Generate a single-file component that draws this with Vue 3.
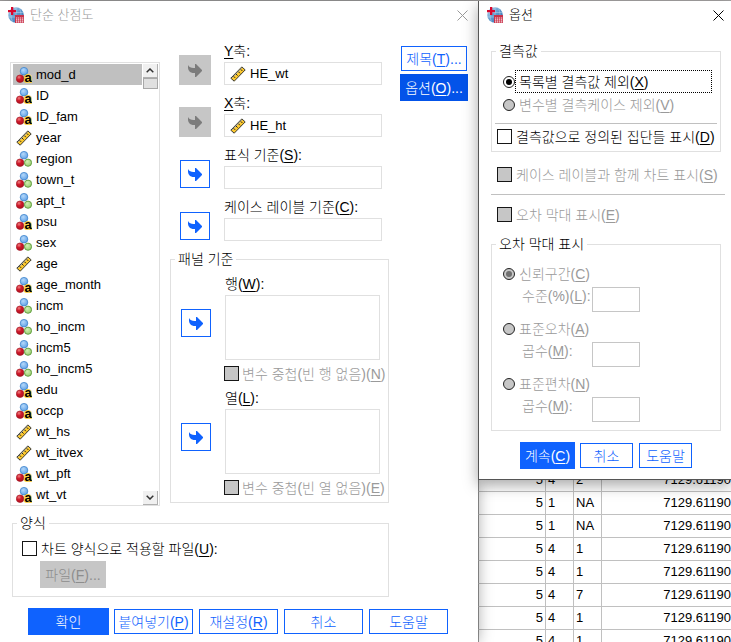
<script setup>
import { ref } from 'vue'

const variables = [
  ['mod_d', 'string'], ['ID', 'string'], ['ID_fam', 'string'], ['year', 'scale'],
  ['region', 'nominal'], ['town_t', 'nominal'], ['apt_t', 'nominal'], ['psu', 'string'],
  ['sex', 'nominal'], ['age', 'scale'], ['age_month', 'string'], ['incm', 'nominal'],
  ['ho_incm', 'nominal'], ['incm5', 'nominal'], ['ho_incm5', 'nominal'], ['edu', 'string'],
  ['occp', 'string'], ['wt_hs', 'scale'], ['wt_itvex', 'scale'], ['wt_pft', 'string'],
  ['wt_vt', 'string'],
].map(([name, kind]) => ({ name, kind }))
const selected = ref('mod_d')

const targets = [
  { id: 'y', pre: '', key: 'Y', post: '축:', value: 'HE_wt' },
  { id: 'x', pre: '', key: 'X', post: '축:', value: 'HE_ht' },
  { id: 'marker', pre: '표식 기준(', key: 'S', post: '):', value: '' },
  { id: 'case', pre: '케이스 레이블 기준(', key: 'C', post: '):', value: '' },
]

const panels = [
  { id: 'row', title: '행(', key: 'W', nest: '변수 중첩(빈 행 없음)(', nestKey: 'N' },
  { id: 'col', title: '열(', key: 'L', nest: '변수 중첩(빈 열 없음)(', nestKey: 'E' },
]

const errorBars = [
  { id: 'ci', title: '신뢰구간(', key: 'C', param: '수준(%)(', paramKey: 'L' },
  { id: 'se', title: '표준오차(', key: 'A', param: '곱수(', paramKey: 'M' },
  { id: 'sd', title: '표준편차(', key: 'N', param: '곱수(', paramKey: 'M' },
]

const rows = [
  ['5', '4', '2'], ['5', '1', 'NA'], ['5', '1', 'NA'], ['5', '4', '1'],
  ['5', '4', '1'], ['5', '4', '7'], ['5', '4', '1'], ['5', '4', '1'],
]
</script>

<template>
  <div class="desktop">
    <svg class="defs" aria-hidden="true">
      <defs>
        <radialGradient id="g-blue" cx=".4" cy=".35" r=".7"><stop offset="0" stop-color="#b4d8fa" /><stop offset="1" stop-color="#5b9ee6" /></radialGradient>
        <radialGradient id="g-red" cx=".35" cy=".3" r=".8"><stop offset="0" stop-color="#f08080" /><stop offset=".4" stop-color="#cf1a2b" /><stop offset="1" stop-color="#a80d1c" /></radialGradient>
        <radialGradient id="g-green" cx=".4" cy=".35" r=".7"><stop offset="0" stop-color="#d3efb4" /><stop offset="1" stop-color="#94cc6a" /></radialGradient>
        <linearGradient id="g-globe" x1="0" y1="0" x2="1" y2="1"><stop offset="0" stop-color="#b9d6ee" /><stop offset=".5" stop-color="#5c97cc" /><stop offset="1" stop-color="#2d68a8" /></linearGradient>
        <symbol id="i-nominal" viewBox="0 0 16 16">
          <circle cx="8" cy="4.2" r="3.8" fill="url(#g-blue)" stroke="#3f84cc" stroke-width=".8" />
          <circle cx="4.1" cy="11.7" r="3.8" fill="url(#g-red)" stroke="#9c1420" stroke-width=".6" />
          <circle cx="12" cy="11.7" r="3.6" fill="url(#g-green)" stroke="#5c9a3c" stroke-width=".9" />
        </symbol>
        <symbol id="i-string" viewBox="0 0 16 16">
          <circle cx="8" cy="4.2" r="3.8" fill="url(#g-blue)" stroke="#3f84cc" stroke-width=".8" />
          <circle cx="4.1" cy="11.7" r="3.8" fill="url(#g-red)" stroke="#9c1420" stroke-width=".6" />
          <text class="glyph-a" x="8.6" y="15">a</text>
        </symbol>
        <symbol id="i-scale" viewBox="0 0 16 16">
          <path d="M.8 12.2 11.8.9 15.2 3.9 4.2 15.2Z" fill="#fdc92e" stroke="#3a3a34" stroke-width="1" />
          <path d="M2 12 11.9 1.9" stroke="#a9aca4" stroke-width="1" fill="none" />
          <path d="m3.6 10.3 1.6 1.6M6 8l1.6 1.6M8.4 5.7 10 7.3M10.8 3.4l1.6 1.6" stroke="#2e2a18" stroke-width="1" />
        </symbol>
        <symbol id="i-arrow" viewBox="0 0 14 13">
          <path d="M0 1C1.2 3.2 3 4 5.5 4H7V0h1l6 6v1l-6 6H7V9H4.5L2 8 .5 6 0 4Z" fill="currentColor" />
        </symbol>
        <symbol id="i-app" viewBox="0 0 16 16">
          <circle cx="8" cy="8" r="7.8" fill="url(#g-globe)" />
          <path d="M8 .5v15M1 5.5h14M.5 10h15M4.5 1.5c-2 4-2 9 0 13M11.5 1.5c2 4 2 9 0 13" stroke="#e2effa" stroke-width=".6" fill="none" opacity=".6" />
          <path d="M3 0h2.3v3H8v2.2H5.3V8H3V5.2H0V3h3Z" fill="#d8072d" />
          <path d="M7 8h9v8H7Z" fill="#c8324a" />
          <path d="M8 10.4h1.3v1.2H8zm2 0h1.3v1.2H10zm2 0h1.3v1.2H12zm2 0h1.3v1.2H14zM8 12.3h1.3v1.2H8zm2 0h1.3v1.2H10zm2 0h1.3v1.2H12zm2 0h1.3v1.2H14zM8 14.2h1.3v1.2H8zm2 0h1.3v1.2H10zm2 0h1.3v1.2H12zm2 0h1.3v1.2H14z" fill="#f7dfe3" />
        </symbol>
      </defs>
    </svg>

    <table class="sheet">
      <tbody>
        <tr v-for="(r, i) in rows" :key="i">
          <td class="num first">{{ r[0] }}</td>
          <td class="code">{{ r[1] }}</td>
          <td class="code">{{ r[2] }}</td>
          <td class="num">7129.61190</td>
        </tr>
      </tbody>
    </table>

    <section class="window main">
      <header class="titlebar inactive">
        <svg class="ico"><use href="#i-app" /></svg>
        <h1>단순 산점도</h1>
        <button class="close" aria-label="닫기"><svg viewBox="0 0 11 11"><path d="M.5.5l10 10M10.5.5l-10 10" /></svg></button>
      </header>

      <div class="columns">
        <div class="list">
          <ul role="listbox">
            <li v-for="v in variables" :key="v.name" role="option" :aria-selected="v.name === selected"
                :class="{ on: v.name === selected }" @click="selected = v.name">
              <svg class="ico"><use :href="'#i-' + v.kind" /></svg>{{ v.name }}
            </li>
          </ul>
          <div class="scroll">
            <button aria-label="위로"><svg viewBox="0 0 8 5"><path d="M.7 4.3 4 1l3.3 3.3" /></svg></button>
            <span class="thumb"></span>
            <button class="down" aria-label="아래로"><svg viewBox="0 0 8 5"><path d="M.7.7 4 4 7.3.7" /></svg></button>
          </div>
        </div>

        <div class="middle">
          <div v-for="t in targets" :key="t.id" class="target">
            <button class="move" :disabled="!!t.value" aria-label="이동"><svg><use href="#i-arrow" /></svg></button>
            <div class="entry">
              <label :for="t.id">{{ t.pre }}<u>{{ t.key }}</u>{{ t.post }}</label>
              <div class="field">
                <svg v-if="t.value" class="ico"><use href="#i-scale" /></svg>
                <input :id="t.id" type="text" :value="t.value" readonly>
              </div>
            </div>
          </div>

          <fieldset class="panel">
            <legend>패널 기준</legend>
            <div v-for="p in panels" :key="p.id" class="target">
              <button class="move" aria-label="이동"><svg><use href="#i-arrow" /></svg></button>
              <div class="entry">
                <label :for="p.id">{{ p.title }}<u>{{ p.key }}</u>):</label>
                <textarea :id="p.id" readonly></textarea>
                <label class="check off"><input type="checkbox" disabled><span>{{ p.nest }}<u>{{ p.nestKey }}</u>)</span></label>
              </div>
            </div>
          </fieldset>
        </div>

        <div class="side">
          <button class="btn">제목(<u>T</u>)...</button>
          <button class="btn solid deep">옵션(<u>O</u>)...</button>
        </div>
      </div>

      <fieldset class="template">
        <legend>양식</legend>
        <label class="check"><input type="checkbox"><span>차트 양식으로 적용할 파일(<u>U</u>):</span></label>
        <button class="btn file" disabled>파일(<u>F</u>)...</button>
      </fieldset>

      <footer class="actions">
        <button class="btn solid">확인</button>
        <button class="btn">붙여넣기(<u>P</u>)</button>
        <button class="btn">재설정(<u>R</u>)</button>
        <button class="btn">취소</button>
        <button class="btn">도움말</button>
      </footer>
    </section>

    <section class="window options">
      <header class="titlebar">
        <svg class="ico"><use href="#i-app" /></svg>
        <h1>옵션</h1>
        <button class="close" aria-label="닫기"><svg viewBox="0 0 11 11"><path d="M.5.5l10 10M10.5.5l-10 10" /></svg></button>
      </header>

      <div class="content">
        <fieldset class="missing">
          <legend>결측값</legend>
          <div class="radio"><input id="listwise" type="radio" name="missing" checked><label for="listwise" class="focus">목록별 결측값 제외(<u>X</u>)</label></div>
          <div class="radio off"><input id="pairwise" type="radio" name="missing" disabled><label for="pairwise">변수별 결측케이스 제외(<u>V</u>)</label></div>
          <hr>
          <label class="check"><input type="checkbox"><span>결측값으로 정의된 집단들 표시(<u>D</u>)</span></label>
        </fieldset>

        <label class="check off loose"><input type="checkbox" disabled><span>케이스 레이블과 함께 차트 표시(<u>S</u>)</span></label>
        <hr>
        <label class="check off loose"><input type="checkbox" disabled><span>오차 막대 표시(<u>E</u>)</span></label>

        <fieldset class="bars">
          <legend>오차 막대 표시</legend>
          <div v-for="(b, i) in errorBars" :key="b.id" class="bar off">
            <div class="radio"><input :id="b.id" type="radio" name="bars" disabled :checked="i === 0"><label :for="b.id">{{ b.title }}<u>{{ b.key }}</u>)</label></div>
            <div class="param">
              <label :for="b.id + '-v'">{{ b.param }}<u>{{ b.paramKey }}</u>):</label>
              <input :id="b.id + '-v'" type="text" disabled>
            </div>
          </div>
        </fieldset>
      </div>

      <footer class="actions">
        <button class="btn solid">계속(<u>C</u>)</button>
        <button class="btn">취소</button>
        <button class="btn">도움말</button>
      </footer>
    </section>
  </div>
</template>

<style>
body { margin: 0; overflow: hidden; }
</style>

<style scoped>
.desktop {
  position: relative;
  min-height: 100vh;
  overflow: hidden;
  background: #a5a3a3;
  color: #000;
  font: 300 14px/18px "Liberation Sans", "Noto Sans CJK KR", sans-serif;
}
.desktop *, .desktop *::before { box-sizing: border-box; }
.defs { position: absolute; width: 0; height: 0; }
.glyph-a {
  font: bold 13px "Liberation Sans", sans-serif;
  fill: #000;
  stroke: #f8cf4c;
  stroke-width: 2px;
  paint-order: stroke;
}
button, input, textarea { font: inherit; margin: 0; }
button { padding: 0; border: 0; cursor: pointer; }
u { text-underline-offset: 2px; text-decoration-thickness: 1px; }
.ico { width: 16px; height: 16px; flex: none; }

.window { position: absolute; top: 1px; background: #fff; }
.main { left: 0; bottom: 0; box-shadow: 0 0 14px rgba(0, 0, 0, .35); }
.options {
  left: 478px;
  right: 0;
  border: solid #555;
  border-width: 0 0 1px 1px;
  box-shadow: 0 5px 14px rgba(0, 0, 0, .35);
}

.titlebar { display: flex; align-items: center; height: 28px; padding: 0 10px 0 8px; }
.titlebar h1 { flex: 1; margin: 0 0 0 6px; font-size: 13px; font-weight: 300; }
.close { display: flex; background: none; }
.close svg { width: 11px; height: 11px; fill: none; stroke: #000; }
.inactive h1 { color: #999; }
.inactive .close svg { stroke: #999; }
.options .titlebar { padding-right: 7px; }

.columns { display: grid; grid-template-columns: 150px 219px 68px; column-gap: 10px; padding: 13px 11px 0 10px; }
.list { display: flex; margin-top: 20px; border: 1px solid #e0e0e0; padding: 1px 1px 0 2px; font-size: 13px; }
.list ul { flex: 1; margin: 0; padding: 0; list-style: none; }
.list li { display: flex; align-items: center; gap: 4px; height: 21px; padding-left: 3px; }
.list li.on { background: #c0c0c0; }
.scroll { display: flex; flex-direction: column; width: 16px; padding-left: 1px; }
.scroll button {
  display: grid;
  place-items: center;
  height: 14px;
  background: #f0f0f0;
  border: solid #b0b0b0;
  border-width: 0 1px 1px 0;
}
.scroll svg { width: 8px; height: 5px; fill: none; stroke: #333; stroke-width: 1.5; }
.thumb { height: 11px; background: #e0e0e0; border: 1px solid #a8a8a8; }
.scroll .down { margin-top: auto; }

.middle { display: flex; flex-direction: column; }
.target { display: flex; gap: 13px; padding-left: 9px; }
.middle > .target { height: 52px; }
.entry { display: flex; flex-direction: column; width: 158px; }
.entry > label:first-child { line-height: 18px; height: 20px; }
.move {
  display: grid;
  place-items: center;
  width: 30px;
  height: 28px;
  margin: 14px 1px 0;
  flex: none;
  background: #fff;
  border: 1px solid #0f62fe;
  color: #0f62fe;
}
.middle > .target .move:enabled { margin-top: 14px; }
.move svg { width: 14px; height: 13px; }
.move:disabled { width: 32px; height: 30px; margin: 13px 0 0; background: #c6c6c6; border: 0; color: #7c7c7c; }
.field { display: flex; align-items: center; gap: 4px; height: 23px; padding-left: 5px; border: 1px solid #e0e0e0; }
.field input { flex: 1; min-width: 0; padding: 0; border: 0; background: none; font-size: 13px; outline: 0; }

fieldset { min-width: 0; margin: 0; padding: 0; border: 1px solid #e0e0e0; }
legend { margin-left: 4px; padding: 0 3px; line-height: 18px; height: 18px; }
.panel { padding: 7px 0; }
.panel .target + .target { margin-top: 8px; }
.panel .move { margin-top: 34px; }
textarea { width: 155px; height: 65px; margin-bottom: 6px; border: 1px solid #e0e0e0; resize: none; outline: 0; }

.check { display: flex; align-items: center; gap: 4px; height: 15px; white-space: nowrap; }
.entry .check { gap: 3px; margin-left: -1px; }
.check input { appearance: none; width: 15px; height: 15px; flex: none; border: 1px solid #161616; background: #fff; }
.check input:disabled { background: #c6c6c6; }
.off { color: #9a9a9a; }

.side { display: flex; flex-direction: column; gap: 2px; padding-top: 3px; margin-left: 1px; width: 68px; }
.btn { height: 25px; margin: 1px; background: #fff; border: 1px solid #0f62fe; color: #0f62fe; white-space: nowrap; }
.btn.solid { height: 27px; margin: 0; background: #0f62fe; color: #fff; }
.btn.deep { background: #0353e9; border-color: #0353e9; }
.btn:disabled { background: #c6c6c6; border-color: #c6c6c6; color: #8d8d8d; }

.template { margin: 8px 89px 0 12px; padding: 9px 9px 8px; }
.template legend { margin-left: -5px; }
.template .btn.file { display: block; width: 66px; height: 27px; margin: 5px 0 0 18px; }
.actions { display: grid; grid-auto-flow: column; column-gap: 4px; }
.main .actions { grid-auto-columns: 81px; padding: 11px 0 7px 28px; }
.options .actions { grid-auto-columns: 55px; padding: 11px 0 10px 41px; }

.content { padding: 13px 10px 0 12px; }
.missing { padding: 10px 0 7px; }
.missing hr { margin: 6px 3px 5px; }
.missing .check { margin-left: 5px; }
hr { height: 1px; margin: 12px -4px 12px 0; border: 0; background: #c0c0c0; }
.loose { margin-left: 6px; }
.missing + .loose { margin-top: 15px; }
.radio { display: flex; align-items: center; height: 24px; padding: 0 8px 0 11px; }
.radio:has(.focus) { height: 23px; }
.radio label { flex: 1; padding-left: 4px; white-space: nowrap; }
.radio .focus { padding: 2px 3px 1px; height: 23px; line-height: 18px; border: 1px dotted #000; }
.radio input {
  appearance: none;
  display: grid;
  place-items: center;
  width: 12px;
  height: 12px;
  flex: none;
  border: 1px solid #222;
  border-radius: 50%;
  background: #fff;
}
.radio input:disabled { background: #c6c6c6; }
.radio input:checked::before { content: ""; width: 6px; height: 6px; border-radius: 50%; background: #000; }
.radio input:disabled:checked::before { background: #6f6f6f; }

.bars { margin-top: 13px; padding: 11px 0 8px; }
.bar + .bar { margin-top: 7px; }
.bar .radio { height: 20px; margin-bottom: 3px; }
.param { display: grid; grid-template-columns: 70px 48px; padding-left: 30px; }
.param input { width: 48px; height: 25px; border: 1px solid #c6c6c6; background: #fff; }

.sheet {
  position: absolute;
  top: 469px;
  left: 478px;
  right: 0;
  width: calc(100% - 478px);
  border-collapse: separate;
  border-spacing: 0;
  table-layout: fixed;
  background: #fff;
  font-size: 13px;
}
.sheet td { height: 23px; padding: 0 2px; border: solid #c0c0c0; border-width: 0 1px 1px 0; overflow: hidden; }
.sheet .num { text-align: right; }
.sheet .num:last-child { padding-right: 0; border-right: 0; }
.sheet .first { width: 68px; border-left: 1px solid #999; }
.sheet .code { width: 28px; }
</style>
